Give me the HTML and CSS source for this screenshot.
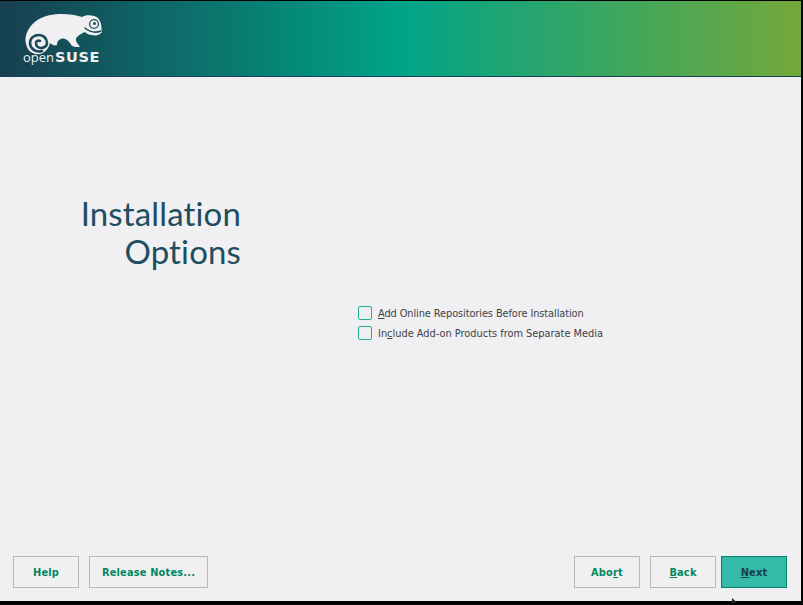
FILE: index.html
```html
<!DOCTYPE html>
<html lang="en">
<head>
<meta charset="utf-8">
<title>Installation Options</title>
<link rel="stylesheet" href="styles.css">
</head>
<body>
<div class="window">
  <header class="banner">
    <div class="logo">
      <svg class="mark" viewBox="22 14 82 44" width="82" height="44" aria-hidden="true">
        <path class="mark-body" d="M27 47C23 38 27 28 36 21C44 15 54 14 62 14C69 14 76 15 82 17C85 15 90 15 94 16C98 17 100 20 101 24L102 32C100 35 96 36 92 35C89 35 87 34 85 32C82 33 79 35 77 37C75 39 76 42 78 44L80 47C77 47 74 47 72 46C70 43 68 40 65 39C62 38 60 39 58 41C57 43 57 44 57 45C55 46 52 45 50 43C49 48 45 53 40 54C34 55 29 52 27 47Z"/>
        <path class="mark-cut" d="M42 51C35 53 30 48 30 43C30 38 34 35 39 35C44 35 47 39 47 43C47 46 44 48 41 48C38 48 36 46 36 43C36 41 38 40 40 41"/>
        <circle class="mark-eye" cx="94" cy="24" r="4.400"/>
        <circle class="mark-pupil" cx="94.500" cy="23.500" r="1.500"/>
        <path class="mark-mouth" d="M85 28C90 32 96 33 101 31"/>
      </svg>
      <div class="wordmark">open<b>SUSE</b></div>
    </div>
  </header>
  <main class="content">
    <h1 class="title">Installation<br>Options</h1>
    <div class="options">
      <label class="option option-first"><span class="box"></span><span><u>A</u>dd Online Repositories Before Installation</span></label>
      <label class="option"><span class="box"></span><span>In<u>c</u>lude Add-on Products from Separate Media</span></label>
    </div>
  </main>
  <footer class="actions">
    <button class="btn btn-help">Help</button>
    <button class="btn btn-notes">Release Notes...</button>
    <span class="spacer"></span>
    <button class="btn">Abo<u>r</u>t</button>
    <button class="btn"><u>B</u>ack</button>
    <button class="btn btn-next"><u>N</u>ext</button>
  </footer>
</div>
<svg class="cursor" viewBox="0 0 8 6" width="8" height="6" aria-hidden="true"><path d="M0 0L5 4.500H2.500L0 6Z"/></svg>
</body>
</html>
```
FILE: styles.css
```css
* { box-sizing: border-box; }
html, body { margin: 0; height: 100%; background: #000; overflow: hidden; }
body { position: relative; padding-top: 1px; font-family: "DejaVu Sans", sans-serif; }
.window {
  width: 801px;
  height: 600px;
  background: #f0f0f2;
  display: flex;
  flex-direction: column;
}
.banner {
  height: 76px;
  flex: none;
  background: linear-gradient(90deg, #173f4f 0%, #00a489 50%, #73a83a 100%);
  border-bottom: 1px solid #173f4f;
  padding: 13px 0 0 22px;
}
.logo { width: 82px; position: relative; }
.mark { display: block; }
.mark-body { fill: #f0f0f2; }
.mark-cut { fill: none; stroke: #1a4a56; stroke-width: 2.600; stroke-linecap: round; }
.mark-eye { fill: none; stroke: #1a4f5a; stroke-width: 1.300; }
.mark-pupil { fill: #1a4f5a; }
.mark-mouth { fill: none; stroke: #1a4f5a; stroke-width: 1.500; stroke-linecap: round; }
.wordmark {
  position: absolute;
  left: 1px;
  top: 34px;
  font-family: "Open Sans", sans-serif;
  font-size: 13px;
  line-height: 18px;
  color: #f0f0f2;
  white-space: nowrap;
}
.wordmark b {
  font-family: "DejaVu Sans", sans-serif;
  font-weight: 700;
  font-size: 14.500px;
  letter-spacing: .6px;
  margin-left: 1px;
}
.content { flex: 1; display: flex; min-height: 0; }
.title {
  flex: none;
  width: 241px;
  margin: 117px 0 0;
  text-align: right;
  font-family: "Lato", sans-serif;
  font-weight: 400;
  font-size: 33px;
  line-height: 38px;
  letter-spacing: .15px;
  color: #1f4e60;
}
.options {
  margin: 229px 0 0 117px;
  display: flex;
  flex-direction: column;
  gap: 6px;
}
.option {
  display: flex;
  align-items: center;
  gap: 6px;
  height: 14px;
  font-size: 9.800px;
  color: #3d3f45;
  white-space: nowrap;
}
.option-first { letter-spacing: -.09px; }
.box {
  width: 14px;
  height: 14px;
  flex: none;
  border: 1px solid #21b28d;
  border-radius: 2px;
  background: #f0f0f2;
}
.actions {
  flex: none;
  display: flex;
  gap: 10px;
  padding: 0 14px 13px 13px;
}
.spacer { flex: 1; }
.btn {
  width: 66px;
  height: 32px;
  padding: 0;
  background: #f0f0f2;
  border: 1px solid #b8b8bc;
  border-radius: 0;
  font-family: "DejaVu Sans", sans-serif;
  font-weight: 700;
  font-size: 9.800px;
  letter-spacing: .2px;
  color: #00875f;
}
.btn-notes { width: 119px; }
.btn-next {
  margin-left: -5px;
  background: #35b9a8;
  border-color: #00876b;
  color: #173f4f;
}
.cursor { position: absolute; left: 732px; top: 598px; }
.cursor path { fill: #222; }
```
